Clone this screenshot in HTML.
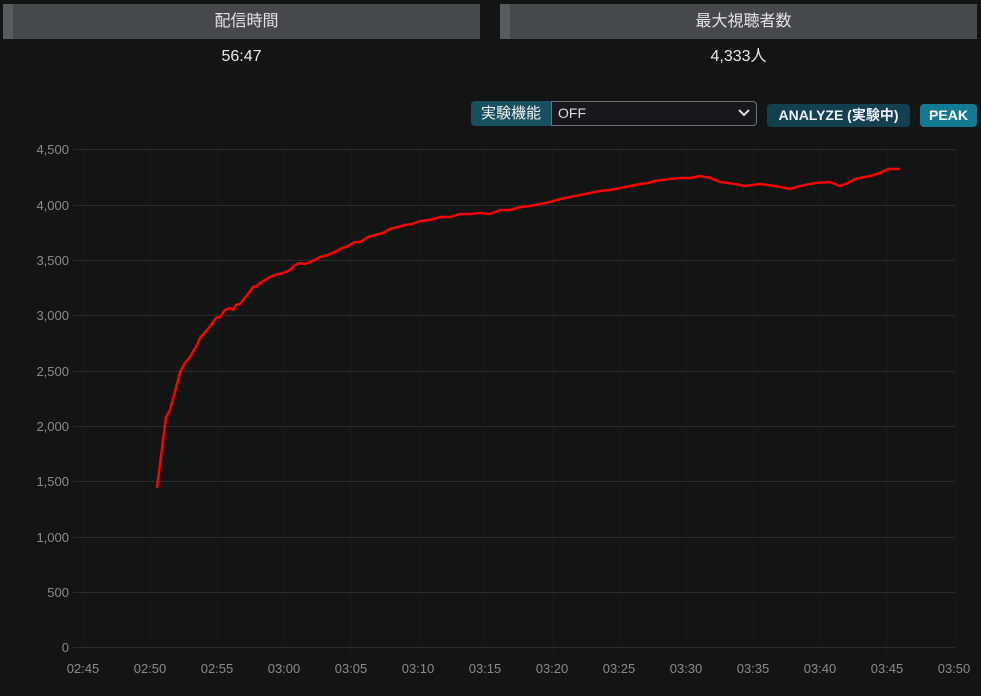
<!DOCTYPE html>
<html><head><meta charset="utf-8"><style>
body{margin:0;background:#131514;width:981px;height:696px;overflow:hidden;font-family:"Liberation Sans","Noto Sans CJK JP",sans-serif;color:#e6e6e6}
.hd{position:absolute;top:4px;height:35px;background:#45494c;border-left:10px solid #575c60;box-sizing:border-box;text-align:center;line-height:35px;font-size:16px;color:#e2e2e2}
.val{position:absolute;top:47px;height:20px;line-height:20px;font-size:16px;text-align:center;color:#e8e8e8}
</style></head><body>
<div class="hd" style="left:3px;width:477px">配信時間</div>
<div class="hd" style="left:500px;width:477px">最大視聴者数</div>
<div class="val" style="left:3px;width:477px">56:47</div>
<div class="val" style="left:500px;width:477px">4,333人</div>
<div style="position:absolute;left:471px;top:101px;width:80px;height:25px;background:#17505f;border-radius:4px 0 0 4px;font-size:15px;line-height:25px;text-align:center;color:#f0f0f0">実験機能</div>
<div style="position:absolute;left:551px;top:101px;height:23px;background:#17191c;border:1px solid #6e7378;border-radius:0 4px 4px 0;font-size:14px;line-height:23px;padding-left:6px;box-sizing:content-box;width:198px;color:#ddd">OFF<svg style="position:absolute;right:6px;top:7px" width="12" height="8"><path d="M1 1l5 5 5-5" stroke="#ddd" stroke-width="2" fill="none"/></svg></div>
<div style="position:absolute;left:767px;top:104px;width:143px;height:23px;background:#12404f;border-radius:4px;font-size:14px;font-weight:bold;line-height:23px;text-align:center;color:#eef">ANALYZE (実験中)</div>
<div style="position:absolute;left:920px;top:104px;width:57px;height:23px;background:#147a94;border-radius:4px;font-size:14px;font-weight:bold;line-height:23px;text-align:center;color:#fff">PEAK</div>
<svg style="position:absolute;left:0;top:0" width="981" height="696" font-family="Liberation Sans, sans-serif" font-size="13" fill="#8a8a8a">
<g stroke="#181a1a"><path d="M83.5 149V655M150.5 149V655M217.5 149V655M284.5 149V655M351.5 149V655M418.5 149V655M485.5 149V655M552.5 149V655M619.5 149V655M686.5 149V655M753.5 149V655M820.5 149V655M887.5 149V655M955.5 149V655"/></g>
<g stroke="#2a2c2c" stroke-width="1">
<line x1="73" x2="955" y1="149.5" y2="149.5"/><line x1="73" x2="955" y1="205.5" y2="205.5"/><line x1="73" x2="955" y1="260.5" y2="260.5"/><line x1="73" x2="955" y1="315.5" y2="315.5"/><line x1="73" x2="955" y1="371.5" y2="371.5"/><line x1="73" x2="955" y1="426.5" y2="426.5"/><line x1="73" x2="955" y1="481.5" y2="481.5"/><line x1="73" x2="955" y1="537.5" y2="537.5"/><line x1="73" x2="955" y1="592.5" y2="592.5"/><line x1="73" x2="955" y1="647.5" y2="647.5"/>
</g>
<g text-anchor="end"><text x="69" y="154">4,500</text><text x="69" y="210">4,000</text><text x="69" y="265">3,500</text><text x="69" y="320">3,000</text><text x="69" y="376">2,500</text><text x="69" y="431">2,000</text><text x="69" y="486">1,500</text><text x="69" y="542">1,000</text><text x="69" y="597">500</text><text x="69" y="652">0</text></g>
<g text-anchor="middle"><text x="83" y="673">02:45</text><text x="150" y="673">02:50</text><text x="217" y="673">02:55</text><text x="284" y="673">03:00</text><text x="351" y="673">03:05</text><text x="418" y="673">03:10</text><text x="485" y="673">03:15</text><text x="552" y="673">03:20</text><text x="619" y="673">03:25</text><text x="686" y="673">03:30</text><text x="753" y="673">03:35</text><text x="820" y="673">03:40</text><text x="887" y="673">03:45</text><text x="954" y="673">03:50</text></g>
<polyline fill="none" stroke="#ff0000" stroke-width="2.5" stroke-linejoin="round" points="157,488 166,417 170,410 176,388 180,372 185,363 190,357 194,350 197,345 200,338 207,330 211,325 216,318 220,317 225,310 230,308 233,310 236,305 240,304 248,294 253,287 257,286 260,283 265,280 270,277 275,275 283,273 290,270 295,265 300,263 305,264 315,260 320,257 328,255 335,252 342,248 348,246 355,242 360,242 368,237 375,235 383,233 390,229 398,227 405,225 412,224 420,221 430,220 440,217 450,217 460,214 470,214 480,213 490,214 500,210 510,210 520,207 530,206 540,204 550,202 560,199 570,197 580,195 590,193 600,191 610,190 620,188 630,186 640,184 648,183 655,181 662,180 670,179 680,178 690,178 700,176 710,178 720,182 735,184 745,186 760,184 775,186 790,189 800,186 815,183 830,182 840,186 848,183 855,179 870,176 880,173 888,169 900,169"/>
</svg>
</body></html>
